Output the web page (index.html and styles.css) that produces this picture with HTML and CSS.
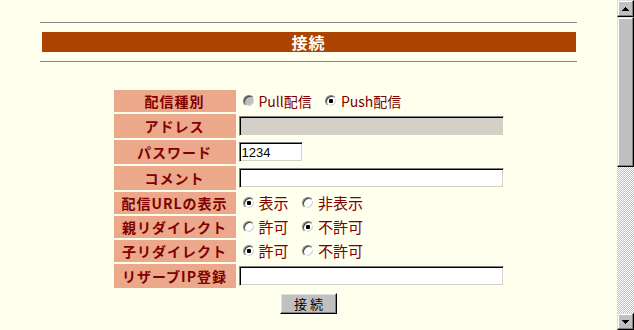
FILE: index.html
```html
<!DOCTYPE html>
<html lang="ja">

<head>
  <meta charset="UTF-8">
  <title>接続</title>
  <link rel="stylesheet" href="styles.css">
</head>

<body>
  <div class="window">
    <div class="page">
      <div class="rule"></div>
      <h1 class="title">接続</h1>
      <div class="rule"></div>

      <table class="form">
        <tr class="radio-row">
          <th>配信種別</th>
          <td class="small">
            <label class="opt"><input type="radio" name="kind" disabled>Pull配信</label>
            <label class="opt"><input type="radio" name="kind" checked>Push配信</label>
          </td>
        </tr>
        <tr class="input-row">
          <th>アドレス</th>
          <td><input type="text" class="field wide" disabled></td>
        </tr>
        <tr class="input-row">
          <th>パスワード</th>
          <td><input type="text" class="field short" value="1234"></td>
        </tr>
        <tr class="input-row">
          <th>コメント</th>
          <td><input type="text" class="field wide"></td>
        </tr>
        <tr class="radio-row">
          <th>配信URLの表示</th>
          <td>
            <label class="opt"><input type="radio" name="showurl" checked>表示</label>
            <label class="opt"><input type="radio" name="showurl">非表示</label>
          </td>
        </tr>
        <tr class="radio-row">
          <th>親リダイレクト</th>
          <td>
            <label class="opt"><input type="radio" name="parent">許可</label>
            <label class="opt"><input type="radio" name="parent" checked>不許可</label>
          </td>
        </tr>
        <tr class="radio-row">
          <th>子リダイレクト</th>
          <td>
            <label class="opt"><input type="radio" name="child" checked>許可</label>
            <label class="opt"><input type="radio" name="child">不許可</label>
          </td>
        </tr>
        <tr class="input-row">
          <th>リザーブIP登録</th>
          <td><input type="text" class="field wide"></td>
        </tr>
      </table>

      <button class="btn">接 続</button>
    </div>

    <!-- classic scrollbar -->
    <div class="scrollbar">
      <div class="sb-btn">
        <svg width="7" height="4" viewBox="0 0 7 4"><path d="M3 0h1v1h1v1h1v1h1v1H0V3h1V2h1V1h1z" fill="#000"/></svg>
      </div>
      <div class="sb-thumb"></div>
      <div class="sb-track"></div>
      <div class="sb-btn">
        <svg width="7" height="4" viewBox="0 0 7 4"><path d="M0 0h7v1H6v1H5v1H4v1H3V3H2V2H1V1H0z" fill="#000"/></svg>
      </div>
    </div>
  </div>
</body>

</html>
```

FILE: styles.css
```css
body {
  margin: 0;
  background-color: #ffffee;
  font-family: "Noto Sans CJK JP", "Liberation Sans", sans-serif;
  color: #800000;
}

.window {
  display: flex;
  height: 330px;
  overflow: hidden;
}

.page {
  flex: 1;
  padding-top: 22px;
}

.rule {
  width: 537px;
  margin: 0 auto;
  border-top: 1px solid #848484;
}

.title {
  width: 534px;
  height: 20px;
  margin: 9px auto;
  background-color: #aa4400;
  color: white;
  font-size: 16px;
  line-height: 20px;
  font-weight: bold;
  text-align: center;
  letter-spacing: 1px;
}

.form {
  border-spacing: 2px;
  margin: 26px auto 0;
  width: 394px;
}

.form th {
  width: 122px;
  padding: 0;
  background-color: #eba88a;
  color: #800000;
  font-size: 14px;
  line-height: 18px;
  letter-spacing: 1px;
  text-align: center;
  vertical-align: middle;
}

.form td {
  padding: 0 0 0 1px;
  font-size: 15px;
  line-height: 18px;
  vertical-align: middle;
  white-space: nowrap;
}

.form td.small {
  font-size: 14px;
}

.radio-row th,
.radio-row td {
  height: 22px;
}

.input-row th,
.input-row td {
  height: 24px;
}

.opt {
  display: inline-flex;
  align-items: center;
  margin-right: 6px;
}

.opt input {
  appearance: none;
  width: 12px;
  height: 12px;
  margin: 0 4px 0 4px;
  border: 1px solid;
  border-color: #808080 #ffffff #ffffff #808080;
  border-radius: 50%;
  background-color: white;
  box-shadow: inset 1px 1px 0 #404040, inset -1px -1px 0 #d4d0c8;
}

.opt input:checked {
  background: radial-gradient(circle, #000 0 2px, #fff 2.5px);
}

.opt input:disabled {
  background-color: #c0c0c0;
}

.field {
  box-sizing: border-box;
  height: 20px;
  padding: 0 2px;
  margin: 0;
  border: 1px solid;
  border-color: #808080 #ffffff #ffffff #808080;
  box-shadow: inset 1px 1px 0 #000, inset -1px -1px 0 #d4d0c8;
  background-color: white;
  font-family: "Liberation Sans", sans-serif;
  font-size: 13px;
  color: black;
  outline: none;
}

.field:disabled {
  background-color: #d4d0c8;
}

.wide {
  width: 265px;
}

.short {
  width: 64px;
}

.btn {
  display: block;
  width: 57px;
  height: 21px;
  margin: 3px auto 0;
  padding: 0;
  background-color: #c0c0c0;
  border: 1px solid;
  border-color: #ffffff #000000 #000000 #ffffff;
  box-shadow: inset -1px -1px 0 #808080, inset 1px 1px 0 #dfdfdf;
  font-family: "Noto Sans CJK JP", sans-serif;
  font-size: 13px;
  line-height: 18px;
  color: black;
}

.scrollbar {
  width: 17px;
  display: flex;
  flex-direction: column;
}

.sb-btn,
.sb-thumb {
  box-sizing: border-box;
  background-color: #c0c0c0;
  border: 1px solid;
  border-color: #dfdfdf #000000 #000000 #dfdfdf;
  box-shadow: inset -1px -1px 0 #808080, inset 1px 1px 0 #ffffff;
}

.sb-btn {
  height: 17px;
  display: flex;
  align-items: center;
  justify-content: center;
}

.sb-thumb {
  height: 150px;
}

.sb-track {
  flex: 1;
  background: repeating-conic-gradient(#c0c0c0 0 25%, #ffffff 0 50%) 0 0 / 2px 2px;
}
```
